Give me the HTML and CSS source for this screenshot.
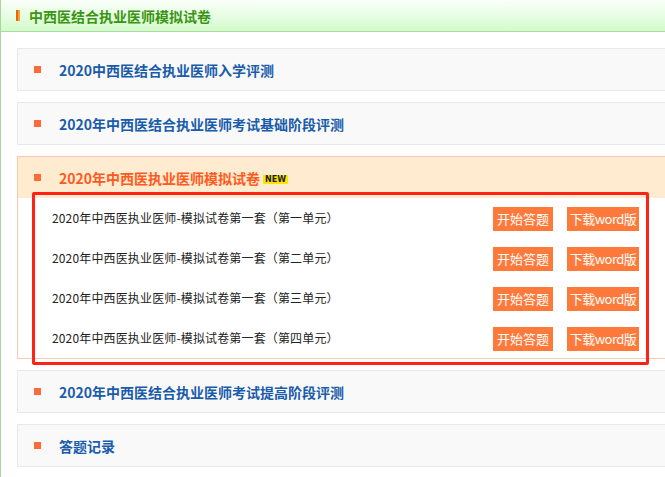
FILE: index.html
```html
<!DOCTYPE html>
<html lang="zh-CN">
<head>
<meta charset="utf-8">
<title>中西医结合执业医师模拟试卷</title>
<link rel="stylesheet" href="styles.css">
</head>
<body>
<div class="page">
  <div class="header">
    <span class="bar"></span>
    <span class="header-title">中西医结合执业医师模拟试卷</span>
  </div>
  <div class="list">
    <div class="card">
      <div class="card-head"><span class="dot"></span><span class="card-title">2020中西医结合执业医师入学评测</span></div>
    </div>
    <div class="card">
      <div class="card-head"><span class="dot"></span><span class="card-title">2020年中西医结合执业医师考试基础阶段评测</span></div>
    </div>
    <div class="card card-active">
      <div class="card-head"><span class="dot"></span><span class="card-title">2020年中西医执业医师模拟试卷</span><span class="new">NEW</span></div>
      <div class="card-body">
        <div class="row"><span class="row-text">2020年中西医执业医师-模拟试卷第一套（第一单元）</span><span class="btn btn-start">开始答题</span><span class="btn btn-word">下载word版</span></div>
        <div class="row"><span class="row-text">2020年中西医执业医师-模拟试卷第一套（第二单元）</span><span class="btn btn-start">开始答题</span><span class="btn btn-word">下载word版</span></div>
        <div class="row"><span class="row-text">2020年中西医执业医师-模拟试卷第一套（第三单元）</span><span class="btn btn-start">开始答题</span><span class="btn btn-word">下载word版</span></div>
        <div class="row"><span class="row-text">2020年中西医执业医师-模拟试卷第一套（第四单元）</span><span class="btn btn-start">开始答题</span><span class="btn btn-word">下载word版</span></div>
      </div>
    </div>
    <div class="card">
      <div class="card-head"><span class="dot"></span><span class="card-title">2020年中西医结合执业医师考试提高阶段评测</span></div>
    </div>
    <div class="card">
      <div class="card-head"><span class="dot"></span><span class="card-title">答题记录</span></div>
    </div>
  </div>
  <div class="highlight"></div>
</div>
</body>
</html>
```

FILE: styles.css
```css
html, body {
  margin: 0;
  padding: 0;
  background: #ffffff;
  overflow: hidden;
}
body {
  font-family: "Noto Sans CJK SC", "Noto Sans", sans-serif;
}
.page {
  position: relative;
  border-left: 1px solid #a8d8a0;
  height: 477px;
  width: 664px;
  overflow: hidden;
}
.header {
  height: 31px;
  border-bottom: 1px solid #a8dca0;
  background: linear-gradient(#fbfffa, #d3fbcb);
  display: flex;
  align-items: center;
  padding-left: 15px;
}
.bar {
  width: 4px;
  height: 11px;
  background: linear-gradient(to right, #e26a00 0, #e26a00 50%, #ff9c3a 50%, #ff9c3a 100%);
}
.header-title {
  margin-left: 9px;
  font-size: 14px;
  font-weight: bold;
  color: #3a9512;
  line-height: 1;
}
.list {
  padding: 16px 0 0 16px;
  width: 700px;
}
.card {
  width: 658px;
  border: 1px solid #e8e8e8;
  background: #f9f9f9;
  margin-bottom: 11px;
}
.card-head {
  height: 41px;
  display: flex;
  align-items: center;
  padding-left: 16px;
}
.dot {
  width: 7px;
  height: 7px;
  background: #ff6a3a;
  flex: none;
}
.card-title {
  margin-left: 18px;
  font-size: 14px;
  font-weight: bold;
  color: #1a5cab;
  line-height: 1;
}
.card-active {
  border-color: #fcc8b0;
  background: #ffffff;
}
.card-active .card-head {
  background: #ffecd0;
}
.card-active .card-title {
  color: #ff5a1e;
}
.new {
  margin-left: 3px;
  margin-top: 3px;
  background: #ffe600;
  color: #222;
  font-family: "DejaVu Sans", sans-serif;
  font-size: 8px;
  font-weight: bold;
  line-height: 9px;
  padding: 0 2px;
}
.card-body {
  background: #ffffff;
}
.row {
  height: 40px;
  display: flex;
  align-items: center;
  padding-left: 34px;
  padding-right: 37px;
}
.row-text {
  flex: 1;
  font-size: 12px;
  color: #222222;
  line-height: 1;
  letter-spacing: 0.15px;
}
.btn {
  height: 24px;
  background: #ff7a3a;
  color: #ffffff;
  font-size: 13px;
  line-height: 24px;
  text-align: center;
  margin-top: 2px;
}
.btn-start {
  width: 60px;
}
.btn-word {
  width: 72px;
  margin-left: 14px;
  letter-spacing: -0.5px;
}
.highlight {
  position: absolute;
  left: 31px;
  top: 192px;
  width: 611px;
  height: 167px;
  border: 3px solid #ff2216;
  border-radius: 2px;
}
```
